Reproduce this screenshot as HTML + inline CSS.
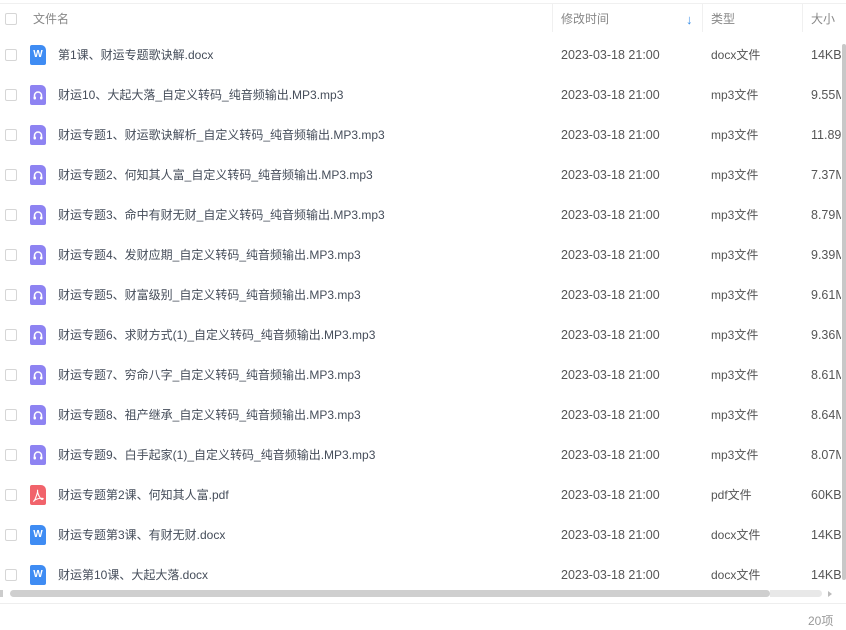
<!DOCTYPE html>
<html><head><meta charset="utf-8">
<style>
*{margin:0;padding:0;box-sizing:border-box}
body{width:846px;height:630px;overflow:hidden;background:#fff;font-family:"Liberation Sans","Noto Sans CJK SC",sans-serif;font-size:12px;color:#454d5a;position:relative}
.top{position:absolute;left:0;top:3px;width:846px;height:1px;background:#f0f0f0}
.hdr{position:absolute;top:4px;height:31px;left:0;width:846px;color:#888}
.hdr span{position:absolute;top:0;line-height:31px}
.div{position:absolute;top:4px;width:1px;height:28px;background:#f0f0f0}
.cb{position:absolute;left:5px;width:12px;height:12px;border:1px solid #d6d6d6;border-radius:2px;background:#fff}
.row{position:absolute;left:0;width:846px;height:40px}
.row span{position:absolute;top:0;line-height:40px;white-space:nowrap}
.ic{position:absolute;left:30px;top:10px;width:16px;height:20px;border-radius:2px 5px 2px 2px}
.w{background:#3f8cf3;color:#fff;font-size:10px;font-weight:bold;text-align:center;line-height:20px}
.m{background:#8e83f2}
.p{background:#f1636b}
.nm{left:58px;color:#454d5a}
.dt{left:561px;color:#555;font-size:12.5px}
.tp{left:711px;color:#555}
.sz{left:811px;color:#555;width:30px;overflow:hidden;font-size:12.5px}
.vs{position:absolute;left:842px;top:44px;width:4px;height:536px;background:#c8c8c8;border-radius:2px}
.hs{position:absolute;left:10px;top:590px;width:760px;height:7px;background:#cfcfcf;border-radius:4px}
.hs2{position:absolute;left:770px;top:590px;width:52px;height:7px;background:#e8e8e8;border-radius:0 4px 4px 0}
.sep{position:absolute;left:0;top:603px;width:846px;height:1px;background:#eee}
.ft{position:absolute;left:808px;top:612px;color:#999}
</style></head><body>
<div class="top"></div>
<div class="hdr">
<div class="cb" style="top:9px"></div>
<span style="left:33px">文件名</span>
<span style="left:561px">修改时间</span>
<span style="left:686px;color:#3a8ee6;font-size:13px;font-weight:bold">&#8595;</span>
<span style="left:711px">类型</span>
<span style="left:811px">大小</span>
</div>
<div class="div" style="left:552px"></div>
<div class="div" style="left:702px"></div>
<div class="div" style="left:802px"></div>

<div class="row" style="top:35px"><div class="cb" style="top:14px"></div><div class="ic w">W</div><span class="nm">第1课、财运专题歌诀解.docx</span><span class="dt">2023-03-18 21:00</span><span class="tp">docx文件</span><span class="sz">14KB</span></div>
<div class="row" style="top:75px"><div class="cb" style="top:14px"></div><div class="ic m"><svg width="16" height="20"><path d="M4.5 13v-2.5a3.5 3.5 0 0 1 7 0V13" stroke="#fff" stroke-width="1.5" fill="none"/><rect x="3.5" y="11.5" width="2.5" height="3" rx="1" fill="#fff"/><rect x="10" y="11.5" width="2.5" height="3" rx="1" fill="#fff"/></svg></div><span class="nm">财运10、大起大落_自定义转码_纯音频输出.MP3.mp3</span><span class="dt">2023-03-18 21:00</span><span class="tp">mp3文件</span><span class="sz">9.55MB</span></div>
<div class="row" style="top:115px"><div class="cb" style="top:14px"></div><div class="ic m"><svg width="16" height="20"><path d="M4.5 13v-2.5a3.5 3.5 0 0 1 7 0V13" stroke="#fff" stroke-width="1.5" fill="none"/><rect x="3.5" y="11.5" width="2.5" height="3" rx="1" fill="#fff"/><rect x="10" y="11.5" width="2.5" height="3" rx="1" fill="#fff"/></svg></div><span class="nm">财运专题1、财运歌诀解析_自定义转码_纯音频输出.MP3.mp3</span><span class="dt">2023-03-18 21:00</span><span class="tp">mp3文件</span><span class="sz">11.89MB</span></div>
<div class="row" style="top:155px"><div class="cb" style="top:14px"></div><div class="ic m"><svg width="16" height="20"><path d="M4.5 13v-2.5a3.5 3.5 0 0 1 7 0V13" stroke="#fff" stroke-width="1.5" fill="none"/><rect x="3.5" y="11.5" width="2.5" height="3" rx="1" fill="#fff"/><rect x="10" y="11.5" width="2.5" height="3" rx="1" fill="#fff"/></svg></div><span class="nm">财运专题2、何知其人富_自定义转码_纯音频输出.MP3.mp3</span><span class="dt">2023-03-18 21:00</span><span class="tp">mp3文件</span><span class="sz">7.37MB</span></div>
<div class="row" style="top:195px"><div class="cb" style="top:14px"></div><div class="ic m"><svg width="16" height="20"><path d="M4.5 13v-2.5a3.5 3.5 0 0 1 7 0V13" stroke="#fff" stroke-width="1.5" fill="none"/><rect x="3.5" y="11.5" width="2.5" height="3" rx="1" fill="#fff"/><rect x="10" y="11.5" width="2.5" height="3" rx="1" fill="#fff"/></svg></div><span class="nm">财运专题3、命中有财无财_自定义转码_纯音频输出.MP3.mp3</span><span class="dt">2023-03-18 21:00</span><span class="tp">mp3文件</span><span class="sz">8.79MB</span></div>
<div class="row" style="top:235px"><div class="cb" style="top:14px"></div><div class="ic m"><svg width="16" height="20"><path d="M4.5 13v-2.5a3.5 3.5 0 0 1 7 0V13" stroke="#fff" stroke-width="1.5" fill="none"/><rect x="3.5" y="11.5" width="2.5" height="3" rx="1" fill="#fff"/><rect x="10" y="11.5" width="2.5" height="3" rx="1" fill="#fff"/></svg></div><span class="nm">财运专题4、发财应期_自定义转码_纯音频输出.MP3.mp3</span><span class="dt">2023-03-18 21:00</span><span class="tp">mp3文件</span><span class="sz">9.39MB</span></div>
<div class="row" style="top:275px"><div class="cb" style="top:14px"></div><div class="ic m"><svg width="16" height="20"><path d="M4.5 13v-2.5a3.5 3.5 0 0 1 7 0V13" stroke="#fff" stroke-width="1.5" fill="none"/><rect x="3.5" y="11.5" width="2.5" height="3" rx="1" fill="#fff"/><rect x="10" y="11.5" width="2.5" height="3" rx="1" fill="#fff"/></svg></div><span class="nm">财运专题5、财富级别_自定义转码_纯音频输出.MP3.mp3</span><span class="dt">2023-03-18 21:00</span><span class="tp">mp3文件</span><span class="sz">9.61MB</span></div>
<div class="row" style="top:315px"><div class="cb" style="top:14px"></div><div class="ic m"><svg width="16" height="20"><path d="M4.5 13v-2.5a3.5 3.5 0 0 1 7 0V13" stroke="#fff" stroke-width="1.5" fill="none"/><rect x="3.5" y="11.5" width="2.5" height="3" rx="1" fill="#fff"/><rect x="10" y="11.5" width="2.5" height="3" rx="1" fill="#fff"/></svg></div><span class="nm">财运专题6、求财方式(1)_自定义转码_纯音频输出.MP3.mp3</span><span class="dt">2023-03-18 21:00</span><span class="tp">mp3文件</span><span class="sz">9.36MB</span></div>
<div class="row" style="top:355px"><div class="cb" style="top:14px"></div><div class="ic m"><svg width="16" height="20"><path d="M4.5 13v-2.5a3.5 3.5 0 0 1 7 0V13" stroke="#fff" stroke-width="1.5" fill="none"/><rect x="3.5" y="11.5" width="2.5" height="3" rx="1" fill="#fff"/><rect x="10" y="11.5" width="2.5" height="3" rx="1" fill="#fff"/></svg></div><span class="nm">财运专题7、穷命八字_自定义转码_纯音频输出.MP3.mp3</span><span class="dt">2023-03-18 21:00</span><span class="tp">mp3文件</span><span class="sz">8.61MB</span></div>
<div class="row" style="top:395px"><div class="cb" style="top:14px"></div><div class="ic m"><svg width="16" height="20"><path d="M4.5 13v-2.5a3.5 3.5 0 0 1 7 0V13" stroke="#fff" stroke-width="1.5" fill="none"/><rect x="3.5" y="11.5" width="2.5" height="3" rx="1" fill="#fff"/><rect x="10" y="11.5" width="2.5" height="3" rx="1" fill="#fff"/></svg></div><span class="nm">财运专题8、祖产继承_自定义转码_纯音频输出.MP3.mp3</span><span class="dt">2023-03-18 21:00</span><span class="tp">mp3文件</span><span class="sz">8.64MB</span></div>
<div class="row" style="top:435px"><div class="cb" style="top:14px"></div><div class="ic m"><svg width="16" height="20"><path d="M4.5 13v-2.5a3.5 3.5 0 0 1 7 0V13" stroke="#fff" stroke-width="1.5" fill="none"/><rect x="3.5" y="11.5" width="2.5" height="3" rx="1" fill="#fff"/><rect x="10" y="11.5" width="2.5" height="3" rx="1" fill="#fff"/></svg></div><span class="nm">财运专题9、白手起家(1)_自定义转码_纯音频输出.MP3.mp3</span><span class="dt">2023-03-18 21:00</span><span class="tp">mp3文件</span><span class="sz">8.07MB</span></div>
<div class="row" style="top:475px"><div class="cb" style="top:14px"></div><div class="ic p"><svg width="16" height="20"><path d="M8 5c-1 0-.5 3 1 6s3 4 4 3-3-1-6 0-4 3-3 2 2-4 3-7 .5-4 1-4z" stroke="#fff" stroke-width="1.1" fill="none"/></svg></div><span class="nm">财运专题第2课、何知其人富.pdf</span><span class="dt">2023-03-18 21:00</span><span class="tp">pdf文件</span><span class="sz">60KB</span></div>
<div class="row" style="top:515px"><div class="cb" style="top:14px"></div><div class="ic w">W</div><span class="nm">财运专题第3课、有财无财.docx</span><span class="dt">2023-03-18 21:00</span><span class="tp">docx文件</span><span class="sz">14KB</span></div>
<div class="row" style="top:555px"><div class="cb" style="top:14px"></div><div class="ic w">W</div><span class="nm">财运第10课、大起大落.docx</span><span class="dt">2023-03-18 21:00</span><span class="tp">docx文件</span><span class="sz">14KB</span></div>

<div class="vs"></div>
<div class="hs"></div><div class="hs2"></div>
<div style="position:absolute;left:0;top:590px;width:3px;height:7px;background:#ccc"></div>
<div style="position:absolute;left:828px;top:591px;width:0;height:0;border-left:4px solid #bbb;border-top:3px solid transparent;border-bottom:3px solid transparent"></div>
<div class="sep"></div>
<div class="ft">20项</div>
</body></html>
